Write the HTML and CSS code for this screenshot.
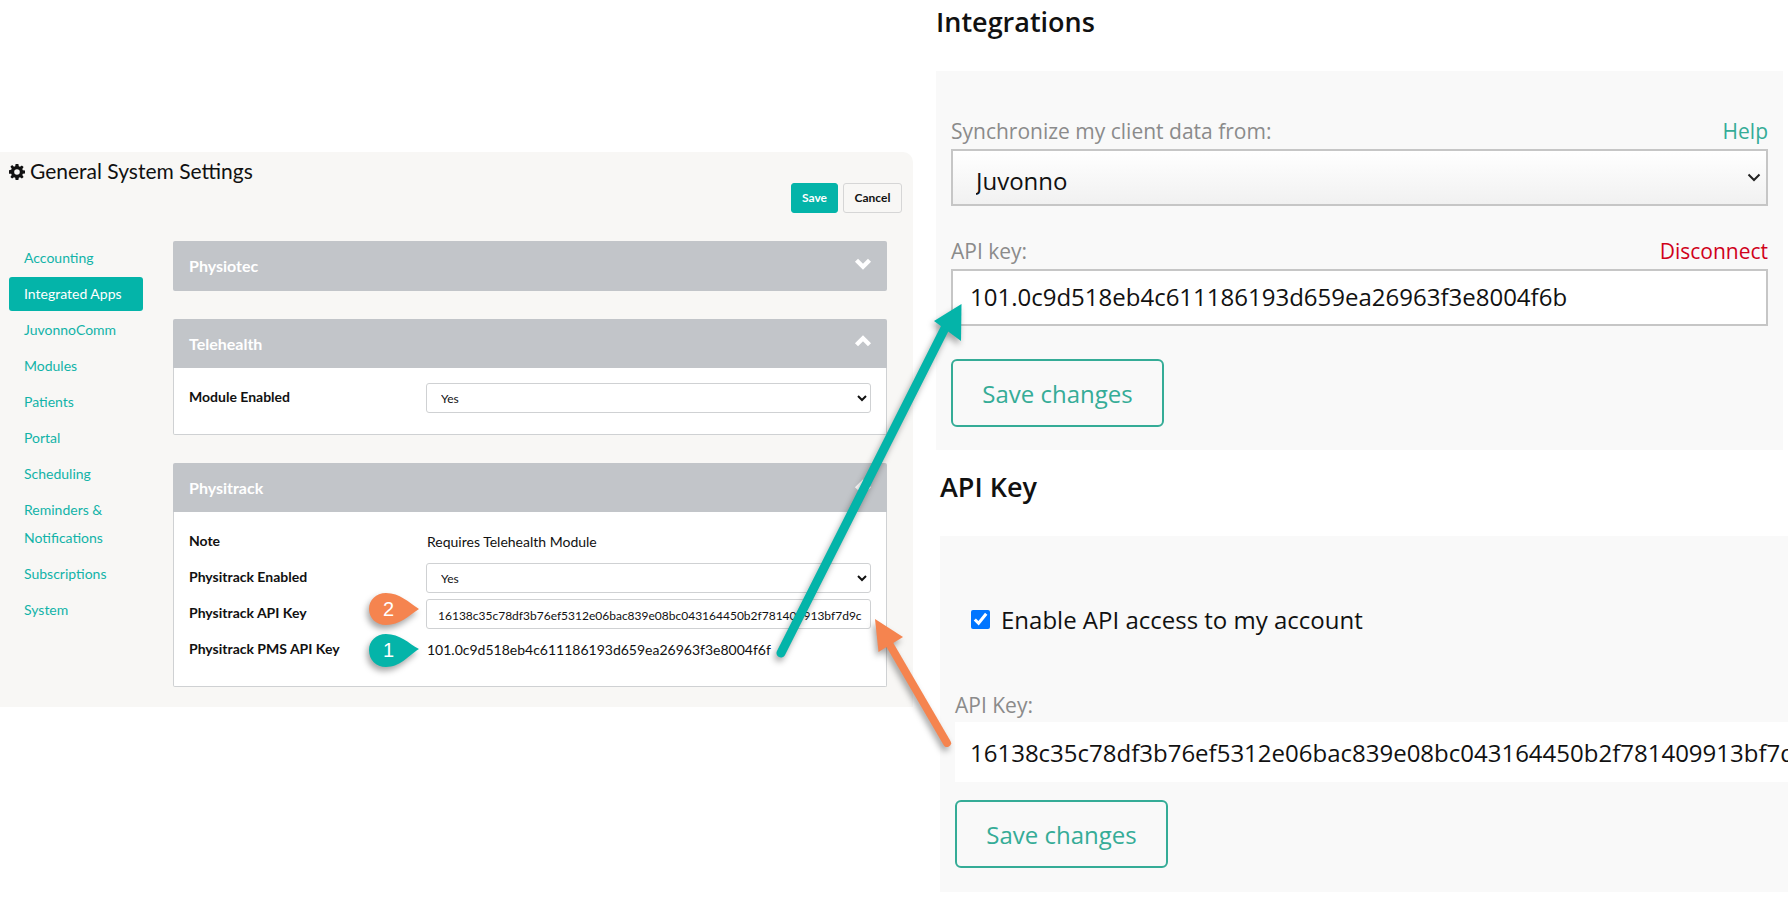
FILE: index.html
```html
<!DOCTYPE html>
<html lang="en">
<head>
<meta charset="utf-8">
<title>Physitrack integration settings</title>
<link rel="stylesheet" href="styles.css">
</head>
<body>
<div class="page">
  <section class="settings">
    <h1 class="settings-title">
      <svg class="gear" viewBox="0 0 16 16" aria-hidden="true"><path fill-rule="evenodd" d="M6.6 0h2.8l.4 2.2 1.2.5L12.9 1.4l1.7 1.7-1.3 1.9.5 1.2 2.2.4v2.8l-2.2.4-.5 1.2 1.3 1.9-1.7 1.7-1.9-1.3-1.2.5-.4 2.2H6.6l-.4-2.2-1.2-.5-1.9 1.3-1.7-1.7 1.3-1.9-.5-1.2L0 9.8V6.2l2.2-.4.5-1.2-1.3-1.9 1.7-1.7L5 2.7l1.2-.5zM8 5.2a2.8 2.8 0 1 0 0 5.6 2.8 2.8 0 0 0 0-5.6z"/></svg>
      General System Settings
    </h1>
    <div class="settings-actions">
      <button class="btn btn-save">Save</button>
      <button class="btn btn-cancel">Cancel</button>
    </div>
    <div class="settings-body">
      <nav class="side-nav">
        <a>Accounting</a>
        <a class="active">Integrated Apps</a>
        <a>JuvonnoComm</a>
        <a>Modules</a>
        <a>Patients</a>
        <a>Portal</a>
        <a>Scheduling</a>
        <a class="two-line">Reminders &amp; Notifications</a>
        <a>Subscriptions</a>
        <a>System</a>
      </nav>
      <div class="accordions">
        <div class="acc">
          <div class="acc-head">Physiotec
            <svg class="chev" viewBox="0 0 16 12" aria-hidden="true"><path d="M2 3l6 6 6-6"/></svg>
          </div>
        </div>
        <div class="acc">
          <div class="acc-head">Telehealth
            <svg class="chev" viewBox="0 0 16 12" aria-hidden="true"><path d="M2 9l6-6 6 6"/></svg>
          </div>
          <div class="acc-body tele-body">
            <div class="row"><span class="row-label">Module Enabled</span><select class="field"><option>Yes</option></select></div>
          </div>
        </div>
        <div class="acc">
          <div class="acc-head">Physitrack
            <svg class="chev" viewBox="0 0 16 12" aria-hidden="true"><path d="M2 9l6-6 6 6"/></svg>
          </div>
          <div class="acc-body track-body">
            <div class="row note-row"><span class="row-label">Note</span><span class="row-value">Requires Telehealth Module</span></div>
            <div class="row"><span class="row-label">Physitrack Enabled</span><select class="field"><option>Yes</option></select></div>
            <div class="row"><span class="row-label">Physitrack API Key</span><input class="field field-key" value="16138c35c78df3b76ef5312e06bac839e08bc043164450b2f781409913bf7d9c"></div>
            <div class="row pms-row"><span class="row-label">Physitrack PMS API Key</span><span class="row-value">101.0c9d518eb4c611186193d659ea26963f3e8004f6f</span></div>
          </div>
        </div>
      </div>
    </div>
  </section>

  <div class="external">
    <section class="ext-block">
      <h2 class="ext-title">Integrations</h2>
      <div class="ext-panel integrations-panel">
        <div class="ext-label-row"><label>Synchronize my client data from:</label><a class="link-help">Help</a></div>
        <div class="select-wrap">
          <select class="ext-select"><option>Juvonno</option></select>
          <svg class="select-chev" viewBox="0 0 14 9" aria-hidden="true"><path d="M1.500 1.500L7 7l5.500-5.500"/></svg>
        </div>
        <div class="ext-label-row second"><label>API key:</label><a class="link-danger">Disconnect</a></div>
        <input class="ext-input" value="101.0c9d518eb4c611186193d659ea26963f3e8004f6b">
        <button class="btn-outline">Save changes</button>
      </div>
    </section>
    <section class="ext-block apikey-block">
      <h2 class="ext-title">API Key</h2>
      <div class="ext-panel apikey-panel">
        <label class="check-row"><input type="checkbox" checked> Enable API access to my account</label>
        <div class="ext-label-row key-label"><label>API Key:</label></div>
        <input class="ext-input borderless" value="16138c35c78df3b76ef5312e06bac839e08bc043164450b2f781409913bf7d9c">
        <button class="btn-outline">Save changes</button>
      </div>
    </section>
  </div>

  <svg class="annotations" viewBox="0 0 1788 913" aria-hidden="true">
    <g class="shadowed">
      <path class="pin-orange" d="M419 609 C408 602 400 593 386 593 C376 593 369 600 369 609 C369 618 376 625 386 625 C400 625 408 616 419 609Z"/>
      <path class="pin-teal" d="M419 649 C408 643 400 634 386 634 C376 634 369 641 369 650 C369 660 376 667 386 667 C400 667 408 656 419 649Z"/>
      <line class="shaft-teal" x1="781" y1="653" x2="945" y2="328"/>
      <path class="head-teal" d="M961.5 304 L934 321 L961 341Z"/>
      <line class="shaft-orange" x1="947" y1="743" x2="887" y2="640"/>
      <path class="head-orange" d="M875 619 L903 637 L878.5 652Z"/>
    </g>
    <text class="pin-num" x="388.500" y="616">2</text>
    <text class="pin-num" x="388.500" y="657">1</text>
  </svg>
</div>
</body>
</html>
```
FILE: styles.css
```css
* { box-sizing: border-box; }
html, body { margin: 0; padding: 0; background: #fff; }
body { width: 1788px; height: 913px; overflow: hidden; font-family: Lato, "Open Sans", sans-serif; color: #111; }
.page { position: relative; display: flex; align-items: flex-start; width: 1788px; height: 913px; }

/* Left: settings card */
.settings { flex: 0 0 913px; height: 555px; margin-top: 152px; padding: 0 11px 0 9px; background: #f8f7f5; border-radius: 0 10px 0 0; }
.settings-title { display: flex; align-items: center; gap: 5px; margin: 0; padding-top: 6px; height: 31px; font-size: 21px; font-weight: 400; line-height: 24px; color: #111; }
.gear { width: 16px; height: 16px; margin-top: 3px; fill: #111; }
.settings-actions { display: flex; justify-content: flex-end; gap: 5px; margin-top: 0; height: 30px; }
.btn { height: 30px; padding: 0 0 2px; border-radius: 3px; font: 700 12px Lato, sans-serif; }
.btn-save { width: 47px; background: #04b4a9; border: 1px solid #04b4a9; color: #fff; }
.btn-cancel { width: 59px; background: #f8f7f5; border: 1px solid #d6d6d6; color: #111; font-weight: 700; }
.settings-body { display: flex; margin-top: 28px; }

.side-nav { flex: 0 0 134px; display: flex; flex-direction: column; margin-right: 30px; }
.side-nav a { display: block; height: 36px; padding: 0 0 0 15px; font-size: 14px; line-height: 34px; color: #12b3a8; border-radius: 3px; }
.side-nav a.active { height: 34px; margin-bottom: 2px; background: #04b4a9; color: #fff; }
.side-nav a.two-line { height: 64px; line-height: 28px; padding-right: 10px; padding-top: 3px; }

.accordions { flex: 0 0 714px; display: flex; flex-direction: column; gap: 28px; }
.acc-head { display: flex; align-items: center; justify-content: space-between; height: 49px; padding: 0 16px; background: #c2c5c9; border-radius: 2px 2px 0 0; color: #fff; font-size: 16px; font-weight: 700; }
.acc:first-child .acc-head { height: 50px; padding-bottom: 2px; border-radius: 2px; }
.chev { width: 18px; height: 13px; margin-right: -1px; fill: none; stroke: #fff; stroke-width: 4; margin-top: -5px; }
.acc:first-child .chev { margin-top: -3px; }
.acc-body { background: #fff; border: 1px solid #cfd1d3; border-top: 0; border-radius: 0 0 2px 2px; padding: 0 15px; }
.tele-body { height: 67px; padding-top: 15px; }
.track-body { height: 175px; padding-top: 15px; }
.row { display: flex; align-items: center; height: 30px; margin-bottom: 6px; }
.note-row { height: 28px; margin-bottom: 8px; }
.pms-row { height: 28px; margin-bottom: 0; }
.row-label { flex: 0 0 237px; padding-bottom: 4px; font-size: 14px; font-weight: 700; color: #111; }
.note-row .row-label, .pms-row .row-label { padding-bottom: 2px; }
.row-value { padding-left: 1px; font-size: 14px; color: #111; }
.field { flex: 0 0 445px; width: 445px; height: 30px; background: #fff; border: 1px solid #cfd1d3; border-radius: 3px; padding: 1px 10px 0; font: 12px Lato, sans-serif; color: #111; }
.field-key { padding: 2px 6px 0 11px; }

/* Right: external product screens */
.external { flex: 0 0 875px; display: flex; flex-direction: column; margin-left: 23px; font-family: "Open Sans", sans-serif; }
.ext-title { margin: 0; font-size: 27px; line-height: 36px; font-weight: 600; color: #111; }
.ext-block:first-child .ext-title { padding-bottom: 4px; margin-top: 4px; height: 38px; }
.ext-panel { background: #f9f9f9; margin-top: 29px; }
.integrations-panel { width: 847px; height: 379px; padding: 47px 15px 0; }
.ext-label-row { display: flex; justify-content: space-between; align-items: center; height: 30px; padding-bottom: 4px; font-size: 21px; color: #8b8b8b; }
.ext-label-row.second { margin-top: 32px; }
.link-help { color: #35ac97; }
.link-danger { color: #d0021b; }
.select-wrap { position: relative; width: 817px; height: 57px; margin-top: 1px; }
.ext-select { display: block; appearance: none; width: 100%; height: 100%; padding: 6px 0 0 23px; border: 2px solid #c6c6c6; background: linear-gradient(#fff, #f1f1f1); font: 24px "Open Sans", sans-serif; color: #111; }
.select-chev { position: absolute; right: 7px; top: 24px; width: 14px; height: 9px; fill: none; stroke: #222; stroke-width: 2; }
.ext-input { display: block; width: 817px; height: 57px; margin-top: 1px; padding: 0 0 2px 17px; border: 2px solid #c6c6c6; background: #fff; font: 24px "Open Sans", sans-serif; color: #111; outline: none; }
.ext-input.borderless { width: 833px; height: 60px; border: 0; padding: 0 0 0 15px; margin-top: 0; }
.btn-outline { display: block; width: 213px; height: 68px; margin-top: 33px; background: transparent; border: 2px solid #35ac97; border-radius: 6px; color: #35ac97; font: 24px "Open Sans", sans-serif; }
.apikey-block { margin-left: 4px; margin-top: 20px; }
.apikey-block .ext-title { height: 36px; line-height: 34px; }
.apikey-panel { width: 848px; height: 356px; margin-top: 30px; padding: 0 0 0 15px; }
.check-row { display: flex; align-items: center; gap: 11px; padding: 71px 0 0 16px; height: 95px; font-size: 24px; color: #111; }
.check-row input { width: 19px; height: 19px; margin: 0; }
.key-label { margin-top: 61px; height: 30px; }
.apikey-panel .btn-outline { margin-top: 18px; }

/* Annotation overlay */
.annotations { position: absolute; inset: 0; width: 1788px; height: 913px; pointer-events: none; }
.shadowed { filter: drop-shadow(-2px 4px 3px rgba(0,0,0,.35)); }
.pin-orange, .head-orange { fill: #f5844f; }
.pin-teal, .head-teal { fill: #04b4a9; }
.shaft-teal { stroke: #04b4a9; stroke-width: 9; stroke-linecap: round; }
.shaft-orange { stroke: #f5844f; stroke-width: 8; stroke-linecap: round; }
.pin-num { font: 20px "Liberation Sans", sans-serif; fill: #fff; text-anchor: middle; }
```
